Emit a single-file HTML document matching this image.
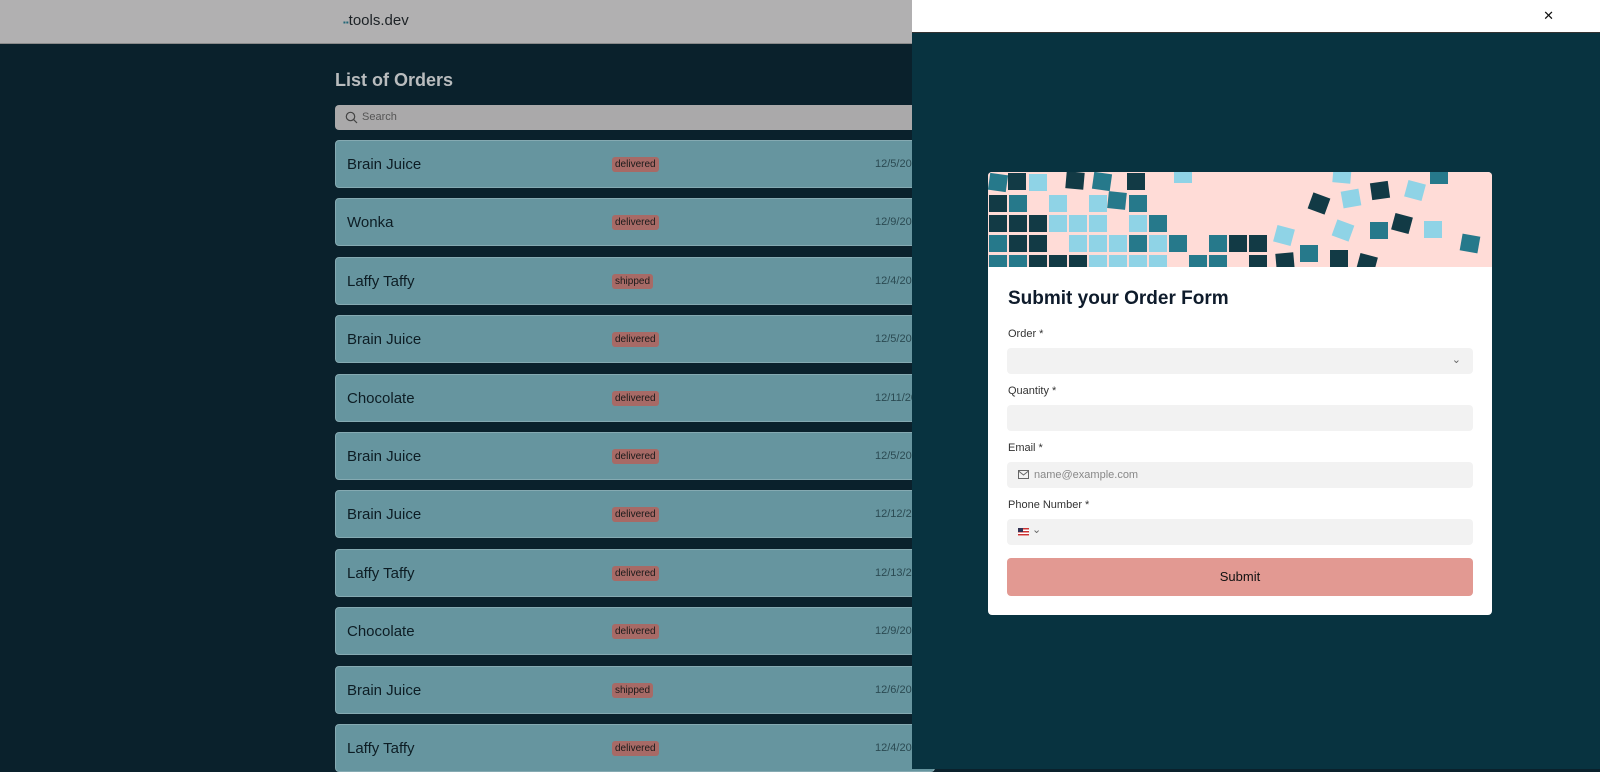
<!DOCTYPE html>
<html><head><meta charset="utf-8"><style>
*{box-sizing:border-box;margin:0;padding:0}
body{width:1600px;height:769px;overflow:hidden;background:#0a212c;font-family:"Liberation Sans",sans-serif;position:relative}
.hdr{position:absolute;left:0;top:0;width:912px;height:44px;background:#b1b0b1;border-bottom:1px solid #8a8a8a}
.logo{position:absolute;left:343px;top:12px;font-size:15px;color:#1d2226}
h1{position:absolute;left:335px;top:70px;font-size:18px;color:#b9bcbe;font-weight:bold}
.search{position:absolute;left:335px;top:105px;width:600px;height:25px;background:#aaa9aa;border-radius:4px;font-size:11px;color:#555;padding:6px 0 0 27px}
.row{position:absolute;left:335px;width:600px;height:48px;background:#66959f;border-radius:4px;border:1px solid #85aab2}
.row .n{position:absolute;left:11px;top:15px;font-size:15px;color:#0d1d24}
.row .b{position:absolute;left:276px;top:16px;font-size:10px;background:#a76a66;color:#1a1a1a;padding:2px 3px;border-radius:3px}
.row .d{position:absolute;left:539px;top:17px;font-size:11px;color:#2b4a52}
.panel{position:absolute;left:912px;top:0;width:688px;height:769px;background:#083340}
.ptop{position:absolute;left:0;top:0;width:688px;height:33px;background:#fff;border-bottom:1px solid #333}
.x{position:absolute;right:46px;top:8px;font-size:13px;color:#111}
.card{position:absolute;left:76px;top:172px;width:504px;height:443px;background:#fff;border-radius:4px;overflow:hidden}
.ban{position:absolute;left:0;top:0;width:504px;height:95px;background:#ffdcd7;overflow:hidden}
.ban i{position:absolute;width:18px;height:17px}
.k{background:#123a45}.t{background:#26798b}.l{background:#8fd3e6}
.card h2{position:absolute;left:20px;top:116px;font-size:19px;color:#0e1b2b;font-weight:bold}
.lab{position:absolute;left:20px;font-size:11px;color:#333}
.in{position:absolute;left:19px;width:466px;height:26px;background:#f2f2f2;border-radius:4px;font-size:11px;color:#888}
.btn{position:absolute;left:19px;top:386px;width:466px;height:38px;background:#e29992;border-radius:4px;font-size:13px;color:#111;text-align:center;line-height:38px}
</style></head><body>
<div class="hdr"><div class="logo"><span style="font-size:8px;color:#267">▪▪</span>tools.dev</div></div>
<h1>List of Orders</h1>
<div class="search"><svg style="position:absolute;left:10px;top:6px" width="13" height="13" viewBox="0 0 13 13"><circle cx="5.5" cy="5.5" r="4.2" fill="none" stroke="#444" stroke-width="1.2"/><path d="M8.6 8.6L12 12" stroke="#444" stroke-width="1.2"/></svg>Search</div>
<div class="row" style="top:140px"><span class="n">Brain Juice</span><span class="b">delivered</span><span class="d">12/5/2023</span></div>
<div class="row" style="top:198px"><span class="n">Wonka</span><span class="b">delivered</span><span class="d">12/9/2023</span></div>
<div class="row" style="top:257px"><span class="n">Laffy Taffy</span><span class="b">shipped</span><span class="d">12/4/2023</span></div>
<div class="row" style="top:315px"><span class="n">Brain Juice</span><span class="b">delivered</span><span class="d">12/5/2023</span></div>
<div class="row" style="top:374px"><span class="n">Chocolate</span><span class="b">delivered</span><span class="d">12/11/2023</span></div>
<div class="row" style="top:432px"><span class="n">Brain Juice</span><span class="b">delivered</span><span class="d">12/5/2023</span></div>
<div class="row" style="top:490px"><span class="n">Brain Juice</span><span class="b">delivered</span><span class="d">12/12/2023</span></div>
<div class="row" style="top:549px"><span class="n">Laffy Taffy</span><span class="b">delivered</span><span class="d">12/13/2023</span></div>
<div class="row" style="top:607px"><span class="n">Chocolate</span><span class="b">delivered</span><span class="d">12/9/2023</span></div>
<div class="row" style="top:666px"><span class="n">Brain Juice</span><span class="b">shipped</span><span class="d">12/6/2023</span></div>
<div class="row" style="top:724px"><span class="n">Laffy Taffy</span><span class="b">delivered</span><span class="d">12/4/2023</span></div>
<div class="panel"><div class="ptop"><span class="x">✕</span></div>
<div class="card"><div class="ban">
<i class="t" style="left:1px;top:2px;transform:rotate(8deg)"></i><i class="k" style="left:20px;top:1px"></i><i class="l" style="left:41px;top:2px"></i><i class="k" style="left:78px;top:0px;transform:rotate(5deg)"></i><i class="t" style="left:105px;top:1px;transform:rotate(8deg)"></i><i class="k" style="left:139px;top:1px"></i><i class="l" style="left:186px;top:-6px"></i>
<i class="k" style="left:1px;top:23px"></i><i class="t" style="left:21px;top:23px"></i><i class="l" style="left:61px;top:23px"></i><i class="l" style="left:101px;top:23px"></i><i class="t" style="left:120px;top:20px;transform:rotate(6deg)"></i><i class="t" style="left:141px;top:23px"></i>
<i class="k" style="left:1px;top:43px"></i><i class="k" style="left:21px;top:43px"></i><i class="k" style="left:41px;top:43px"></i><i class="l" style="left:61px;top:43px"></i><i class="l" style="left:81px;top:43px"></i><i class="l" style="left:101px;top:43px"></i><i class="l" style="left:141px;top:43px"></i><i class="t" style="left:161px;top:43px"></i>
<i class="t" style="left:1px;top:63px"></i><i class="k" style="left:21px;top:63px"></i><i class="k" style="left:41px;top:63px"></i><i class="l" style="left:81px;top:63px"></i><i class="l" style="left:101px;top:63px"></i><i class="l" style="left:121px;top:63px"></i><i class="t" style="left:141px;top:63px"></i><i class="l" style="left:161px;top:63px"></i><i class="t" style="left:181px;top:63px"></i><i class="t" style="left:221px;top:63px"></i><i class="k" style="left:241px;top:63px"></i><i class="k" style="left:261px;top:63px"></i>
<i class="t" style="left:1px;top:83px"></i><i class="t" style="left:21px;top:83px"></i><i class="k" style="left:41px;top:83px"></i><i class="k" style="left:61px;top:83px"></i><i class="k" style="left:81px;top:83px"></i><i class="l" style="left:101px;top:83px"></i><i class="l" style="left:121px;top:83px"></i><i class="l" style="left:141px;top:83px"></i><i class="l" style="left:161px;top:83px"></i><i class="t" style="left:201px;top:83px"></i><i class="t" style="left:221px;top:83px"></i><i class="k" style="left:261px;top:83px"></i>
<i class="l" style="left:287px;top:55px;transform:rotate(15deg)"></i><i class="k" style="left:288px;top:81px;transform:rotate(-5deg)"></i><i class="t" style="left:312px;top:73px"></i><i class="k" style="left:342px;top:78px"></i><i class="k" style="left:370px;top:83px;transform:rotate(15deg)"></i>
<i class="l" style="left:345px;top:-6px;transform:rotate(5deg)"></i><i class="k" style="left:322px;top:23px;transform:rotate(20deg)"></i><i class="l" style="left:354px;top:18px;transform:rotate(-10deg)"></i><i class="k" style="left:383px;top:10px;transform:rotate(-8deg)"></i><i class="l" style="left:418px;top:10px;transform:rotate(15deg)"></i><i class="l" style="left:346px;top:50px;transform:rotate(20deg)"></i><i class="t" style="left:382px;top:50px"></i><i class="k" style="left:405px;top:43px;transform:rotate(15deg)"></i><i class="l" style="left:436px;top:49px"></i><i class="t" style="left:442px;top:-5px"></i><i class="t" style="left:473px;top:63px;transform:rotate(10deg)"></i>
</div>
<h2>Submit your Order Form</h2>
<div class="lab" style="top:156px">Order *</div><div class="in" style="top:176px"><span style="position:absolute;right:12px;top:5px;color:#666">⌄</span></div>
<div class="lab" style="top:213px">Quantity *</div><div class="in" style="top:233px"></div>
<div class="lab" style="top:270px">Email *</div><div class="in" style="top:290px;padding:7px 0 0 27px"><svg style="position:absolute;left:11px;top:8px" width="11" height="10" viewBox="0 0 11 10"><rect x=".5" y=".5" width="10" height="8" fill="none" stroke="#666"/><path d="M.5 1L5.5 5L10.5 1" fill="none" stroke="#666"/></svg>name@example.com</div>
<div class="lab" style="top:327px">Phone Number *</div><div class="in" style="top:347px"><span style="position:absolute;left:11px;top:9px;width:11px;height:8px;background:repeating-linear-gradient(#c33 0 1.5px,#fff 1.5px 3px)"><span style="position:absolute;left:0;top:0;width:5px;height:4px;background:#335"></span></span><span style="position:absolute;left:25px;top:4px;color:#666">⌄</span></div>
<div class="btn">Submit</div>
</div></div>
</body></html>
